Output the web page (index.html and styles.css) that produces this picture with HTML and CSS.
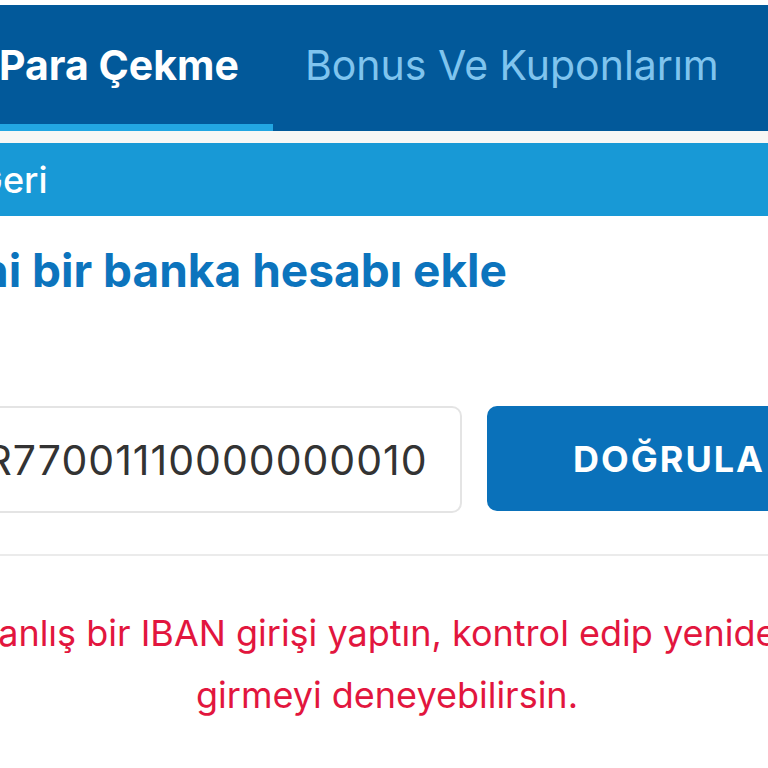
FILE: index.html
```html
<!DOCTYPE html>
<html>

<head>
    <meta charset="utf-8" />
    <title>Para Çekme</title>
    <link rel="stylesheet" href="styles.css">
</head>

<body>
    <div class="page">
        <ul class="tabs">
            <li class="tab active">Para Çekme</li>
            <li class="tab">Bonus Ve Kuponlarım</li>
        </ul>
        <div class="back">Geri</div>
        <div class="content">
            <h2 class="title">Yeni bir banka hesabı ekle</h2>
            <form class="iban_row">
                <input class="iban_input" type="text" value="TR77001110000000010" />
                <button class="iban_btn" type="button">DOĞRULA</button>
            </form>
        </div>
        <hr class="sep" />
        <p class="error">Yanlış bir IBAN girişi yaptın, kontrol edip yeniden<br />girmeyi deneyebilirsin.</p>
    </div>
</body>

</html>
```

FILE: styles.css
```css
/*
    mini reset
*/

* {
    margin: 0;
    padding: 0;
    box-sizing: border-box;
}

html,
body {
    height: 100%;
}

body {
    background: #fff;
    font-family: 'Inter', 'Liberation Sans', sans-serif;
    overflow: hidden;
}

ul {
    list-style: none;
}

/*
    page
*/

.page {
    width: 768px;
    padding-top: 5px;
}

/* tabs */

.tabs {
    display: flex;
    background: #02599a;
}

.tab {
    height: 126px;
    display: flex;
    align-items: center;
    padding: 0 32px;
    border-bottom: 7px solid transparent;
    font-size: 41px;
    color: #7fc4ee;
    white-space: nowrap;
}

.tab.active {
    margin-left: -33px;
    padding-right: 34px;
    color: #fff;
    font-weight: 700;
    border-bottom-color: #22a6e2;
}

/* back bar */

.back {
    height: 85px;
    display: flex;
    align-items: center;
    border-top: 12px solid #f7f7f5;
    background: #1899d6;
    color: #fff;
    font-size: 36px;
    font-weight: 500;
    text-indent: -24px;
}

/* content */

.content {
    margin-left: -62px;
}

.title {
    margin: 28px 0 0 0;
    font-size: 46px;
    line-height: 52px;
    font-weight: 700;
    color: #0c74bd;
    white-space: nowrap;
    text-indent: -14px;
}

.iban_row {
    display: flex;
    gap: 25px;
    margin-top: 110px;
}

.iban_input {
    width: 524px;
    min-width: 0;
    flex: none;
    height: 107px;
    border: 2px solid #e4e4e4;
    border-radius: 10px;
    padding: 0 18px;
    font-family: inherit;
    font-size: 41px;
    letter-spacing: 1px;
    color: #333;
    outline: none;
}

.iban_btn {
    width: 320px;
    flex: none;
    height: 105px;
    border: 0;
    border-radius: 10px;
    background: #0a71ba;
    color: #fff;
    font-family: inherit;
    font-size: 36px;
    font-weight: 700;
    letter-spacing: 2px;
    text-align: left;
    padding-left: 86px;
    white-space: nowrap;
}

.sep {
    margin-top: 41px;
    border: 0;
    border-top: 2px solid #ebebeb;
}

.error {
    margin: 46px -120px 0 -114px;
    text-align: center;
    font-size: 36px;
    line-height: 62px;
    color: #e2163e;
}
```
